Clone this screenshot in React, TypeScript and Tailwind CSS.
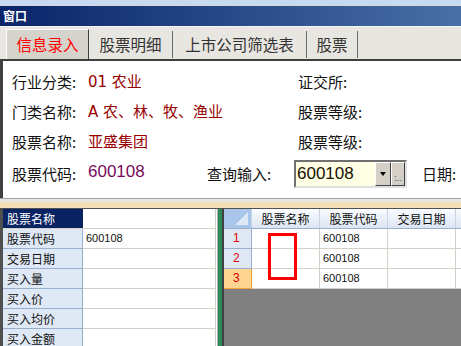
import React from 'react'

const cjk = { fontFamily: '"Noto Sans CJK SC", sans-serif' }
const mixed = { fontFamily: '"DejaVu Sans", "Noto Sans CJK SC", sans-serif' }
const digits = { fontFamily: '"Liberation Sans", sans-serif' }
const grid = { fontFamily: '"Liberation Sans", "Noto Sans CJK SC", sans-serif' }

const leftRows = ['股票代码', '交易日期', '买入量', '买入价', '买入均价', '买入金额']

export default function App() {
  return (
    <div className="w-[461px] h-[346px] overflow-hidden bg-[#e8e6e1] flex flex-col" style={cjk}>
      <div className="h-[6px] shrink-0 bg-[#c6dbf2] border-b border-[#d8d8d8]" />
      <div className="h-[20px] shrink-0 bg-gradient-to-r from-[#0a246a] to-[#4a6fa6] flex items-center pl-[3px] text-[12px] font-bold text-white">
        窗口
      </div>
      <div className="h-[33px] shrink-0 flex items-end pl-[6px] border-t border-[#f4f4f4]">
        <div className="w-[83px] h-[30px] bg-[#d6d3cc] border-t border-l border-white border-r border-r-[#404040] flex items-center justify-center text-[15.5px] text-[#ff0000]">
          信息录入
        </div>
        <Tab w="w-[84px]">股票明细</Tab>
        <Tab w="w-[134px]">上市公司筛选表</Tab>
        <Tab w="w-[51px]">股票</Tab>
      </div>
      <div className="h-[139px] shrink-0 bg-white border-t-2 border-l-[3px] border-[#404040] pt-[6px] pl-[9px] text-[15px] text-[#111]">
        <Row label="行业分类:" value="01 农业" right="证交所:" />
        <Row label="门类名称:" value="A 农、林、牧、渔业" right="股票等级:" />
        <Row label="股票名称:" value="亚盛集团" right="股票等级:" />
        <div className="h-[30px] mt-[2px] flex items-center">
          <span className="w-[76px]">股票代码:</span>
          <span className="w-[119px] -mt-[4px] text-[#7a0a5a] text-[17px]" style={digits}>600108</span>
          <span className="w-[87px]">查询输入:</span>
          <div className="w-[113px] h-[28px] flex border-2 border-t-[#707070] border-l-[#707070] border-b-[#e0e0e0] border-r-[#e0e0e0] bg-[#ffffe6]">
            <span className="flex-1 pl-[1px] text-[17px] text-[#201000] leading-[24px]" style={digits}>600108</span>
            <div className="w-[16px] bg-[#d4d0c8] border border-t-white border-l-white border-b-[#404040] border-r-[#404040] flex items-center justify-center">
              <div className="w-0 h-0 border-l-[3px] border-r-[3px] border-t-[4px] border-l-transparent border-r-transparent border-t-black" />
            </div>
            <div className="w-[14px] bg-[#d4d0c8] border border-t-white border-l-white border-b-[#404040] border-r-[#404040] flex items-end justify-center text-[9px] leading-[14px] text-[#006060]" style={grid}>
              :..
            </div>
          </div>
          <span className="ml-[15px]">日期:</span>
        </div>
      </div>
      <div className="h-[11px] shrink-0 flex flex-col border-t border-[#a0a0a0]">
        <div className="h-[3px] bg-[#e8e6e1]" />
        <div className="h-[6px] bg-[#f5dfb6]" />
        <div className="flex-1 bg-[#505050]" />
      </div>
      <div className="flex-1 flex min-h-0">
        <div className="w-[3px] bg-[#505050]" />
        <div className="w-[212px] bg-white flex flex-col">
          <div className="h-[20px] flex border-b border-[#d4d0c8]">
            <div className="w-[80px] bg-[#0a2363] text-white text-[12px] leading-[20px] pl-[4px]">股票名称</div>
            <div className="flex-1" />
          </div>
          {leftRows.map((r, i) => (
            <div key={r} className="h-[20px] flex border-b border-[#d4d0c8] shrink-0">
              <div className="w-[80px] bg-[#dfe8f5] border-r border-[#98b0cc] border-b border-b-[#98b0cc] -mb-px text-[12px] leading-[19px] pl-[4px] text-[#111]">{r}</div>
              <div className="flex-1 text-[11px] leading-[19px] pl-[3px] text-[#111]" style={grid}>{i === 0 ? '600108' : ''}</div>
            </div>
          ))}
        </div>
        <div className="w-[1px] bg-[#d4d0c8]" />
        <div className="w-[1px] bg-white" />
        <div className="w-[1px] bg-[#b0b0b0]" />
        <div className="w-[4px] bg-[#2e8a58]" />
        <div className="w-[2px] bg-[#404040]" />
        <div className="flex-1 bg-[#808080] flex flex-col">
          <div className="bg-white">
            <div className="h-[20px] flex border-b border-[#9ab0cc] bg-gradient-to-b from-[#fafcff] to-[#dbe5f2] text-[12px] text-[#111]">
              <div className="w-[28px] bg-[#a9c5ea] border-r border-[#c8d6e8] relative">
                <svg className="absolute right-[3px] bottom-[3px]" width="13" height="13" viewBox="0 0 13 13">
                  <polygon points="13,0 13,13 0,13" fill="#dfe9f6" />
                </svg>
              </div>
              <HeadCell>股票名称</HeadCell>
              <HeadCell>股票代码</HeadCell>
              <HeadCell>交易日期</HeadCell>
              <div className="flex-1" />
            </div>
            {[1, 2, 3].map((n) => (
              <div key={n} className="h-[20px] flex border-b border-[#d4d0c8]">
                <div
                  className={
                    n === 3
                      ? 'w-[28px] bg-[#ffd591] border-r border-[#f0a040] border-b border-b-[#f0a040] -mb-px text-[12px] text-[#e00000] leading-[19px] pl-[9px]'
                      : 'w-[28px] bg-[#dfe8f4] border-r border-[#9ab0cc] border-b border-b-[#9ab0cc] -mb-px text-[12px] text-[#e00000] leading-[19px] pl-[9px]'
                  }
                  style={grid}
                >
                  {n}
                </div>
                <div className="w-[68px] border-r border-[#d4d0c8] relative">
                  {n === 1 && (
                    <div className="absolute left-[16px] top-[4px] w-[29px] h-[47px] border-[3px] border-[#ff0000] z-10" />
                  )}
                </div>
                <div className="w-[68px] border-r border-[#d4d0c8] text-[11px] leading-[19px] pl-[3px] text-[#111]" style={grid}>600108</div>
                <div className="w-[68px] border-r border-[#d4d0c8]" />
                <div className="flex-1" />
              </div>
            ))}
          </div>
        </div>
      </div>
    </div>
  )
}

function Tab({ w, children }: { w: string; children: React.ReactNode }) {
  return (
    <div className={`${w} flex items-center justify-center text-[15.5px] text-[#333] border-r border-[#6a6a6a] mb-[1px] h-[27px]`}>
      {children}
    </div>
  )
}

function Row({ label, value, right }: { label: string; value: string; right: string }) {
  return (
    <div className="h-[30px] flex items-center">
      <span className="w-[76px]">{label}</span>
      <span className="w-[210px] text-[#990000]" style={mixed}>{value}</span>
      <span>{right}</span>
    </div>
  )
}

function HeadCell({ children }: { children: React.ReactNode }) {
  return (
    <div className="w-[68px] border-r border-[#c8d4e4] flex items-center justify-center leading-[19px]">{children}</div>
  )
}
